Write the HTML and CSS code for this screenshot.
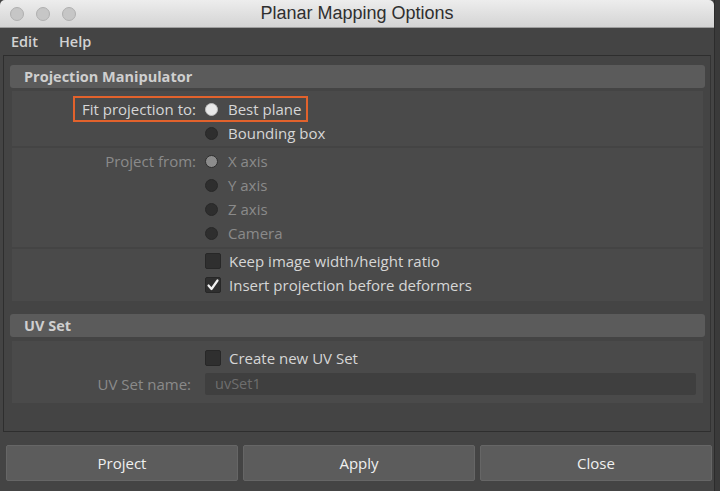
FILE: index.html
```html
<!DOCTYPE html>
<html>
<head>
<meta charset="utf-8">
<link rel="stylesheet" href="styles.css">
</head>
<body>
<div class="window">
  <div class="titlebar">
    <div class="lights"><span class="light"></span><span class="light"></span><span class="light"></span></div>
    <div class="title">Planar Mapping Options</div>
  </div>
  <div class="menubar"><span class="menu">Edit</span><span class="menu">Help</span></div>
  <div class="panel">
    <div class="section-head">Projection Manipulator</div>
    <div class="group g1">
      <div class="row"><span class="label hl-label">Fit projection to:</span><span class="radio on"></span><span class="opt">Best plane</span></div>
      <div class="row"><span class="label"></span><span class="radio"></span><span class="opt">Bounding box</span></div>
      <div class="highlight"></div>
    </div>
    <div class="group g2">
      <div class="row"><span class="label dis">Project from:</span><span class="radio dison"></span><span class="opt dis">X axis</span></div>
      <div class="row"><span class="label"></span><span class="radio"></span><span class="opt dis">Y axis</span></div>
      <div class="row"><span class="label"></span><span class="radio"></span><span class="opt dis">Z axis</span></div>
      <div class="row"><span class="label"></span><span class="radio"></span><span class="opt dis">Camera</span></div>
    </div>
    <div class="group g3">
      <div class="row"><span class="label"></span><span class="check"></span><span class="opt">Keep image width/height ratio</span></div>
      <div class="row"><span class="label"></span><span class="check"><svg width="14" height="14" viewBox="0 0 14 14"><path d="M2.5 7.5 L5.5 11 L11.5 2.5" fill="none" stroke="#f2f2f2" stroke-width="2.2" stroke-linecap="round" stroke-linejoin="round"/></svg></span><span class="opt">Insert projection before deformers</span></div>
    </div>
    <div class="section-head uv">UV Set</div>
    <div class="group g4">
      <div class="row"><span class="label"></span><span class="check"></span><span class="opt">Create new UV Set</span></div>
      <div class="row"><span class="label dis lab2">UV Set name:</span><span class="field">uvSet1</span></div>
    </div>
  </div>
  <div class="buttons">
    <div class="btn b1">Project</div>
    <div class="btn b2">Apply</div>
    <div class="btn b3">Close</div>
  </div>
</div>
</body>
</html>
```

FILE: styles.css
```css
* { box-sizing: border-box; }
html, body { margin: 0; padding: 0; }
body {
  background: #3a3a3a;
  width: 720px;
  height: 491px;
  overflow: hidden;
  font-family: "Open Sans", "DejaVu Sans", sans-serif;
}
.window {
  width: 715px;
  height: 491px;
  background: #444444;
  border-right: 1px solid #2c2c2c;
  display: flex;
  flex-direction: column;
}
.titlebar {
  height: 28px;
  background: linear-gradient(#ededed, #d4d4d4);
  border-bottom: 1px solid #9e9e9e;
  border-radius: 5px 5px 0 0;
  position: relative;
  display: flex;
  align-items: center;
}
.lights { display: flex; gap: 12px; padding-left: 10px; }
.light {
  width: 14px; height: 14px; border-radius: 50%;
  background: #c6c6c6;
  border: 1px solid #b0b0b0;
}
.title {
  position: absolute; left: 0; right: 0; top: 3px;
  text-align: center;
  font-family: "Liberation Sans", Arial, sans-serif;
  font-size: 18px;
  color: #2f2f2f;
}
.menubar {
  height: 27px;
  display: flex;
  align-items: center;
  gap: 21px;
  padding-left: 11px;
  font-size: 14.5px;
  font-weight: 600;
  color: #d2d2d2;
}
.panel {
  margin: 0 3px 0 3px;
  height: 377px;
  border: 1px solid #2e2e2e;
  border-right-color: #333;
  padding: 9px 5px 0 6px;
  display: flex;
  flex-direction: column;
}
.section-head {
  height: 23px;
  background: #5b5b5b;
  border-radius: 3px;
  padding-left: 14px;
  font-size: 14.5px;
  font-weight: 700;
  color: #cfcfcf;
  line-height: 23px;
  margin-bottom: 3px;
}
.section-head.uv { margin-top: 11px; margin-bottom: 4px; }
.group {
  margin: 0 2px 2px 2px;
  background: #4a4a4a;
  position: relative;
}
.g1 { padding: 6px 0 1px; }
.g2 { padding: 1px 0 2px; }
.g3 { padding: 0 0 4px; }
.g4 { padding: 5px 0 7px; }
.row {
  height: 24px;
  display: flex;
  align-items: center;
  font-size: 15px;
  color: #d6d6d6;
}
.g4 .row + .row { margin-top: 2px; }
.label {
  width: 184px;
  text-align: right;
  flex: none;
}
.lab2 { width: 179px; margin-right: 14px; }
.dis { color: #8a8a8a; }
.radio {
  width: 13px; height: 13px; border-radius: 50%;
  background: #2e2e2e;
  border: 1px solid #282828;
  margin-left: 9px;
  margin-right: 10px;
  flex: none;
}
.radio.on { background: #e8e8e8; border-color: #bdbdbd; }
.radio.dison { background: #8c8c8c; border-color: #2e2e2e; }
.check {
  width: 16px; height: 16px;
  background: #2f2f2f;
  border: 1px solid #272727;
  border-radius: 2px;
  margin-left: 9px;
  margin-right: 8px;
  flex: none;
  display: flex; align-items: center; justify-content: center;
}
.opt { white-space: nowrap; }
.highlight {
  position: absolute;
  left: 61px; top: 5px;
  width: 235px; height: 26px;
  border: 2px solid #e2622c;
}
.field {
  flex: 1;
  height: 22px;
  margin-right: 7px;
  background: #3f3f3f;
  border-radius: 2px;
  color: #6e6e6e;
  font-size: 14.5px;
  line-height: 22px;
  padding-left: 10px;
}
.buttons {
  display: flex;
  gap: 5px;
  padding: 13px 2px 0 6px;
}
.btn {
  height: 36px;
  flex: 1;
  background: #5c5c5c;
  border: 1px solid #666;
  border-radius: 2px;
  color: #f0f0f0;
  font-size: 15px;
  display: flex; align-items: center; justify-content: center;
}
```
